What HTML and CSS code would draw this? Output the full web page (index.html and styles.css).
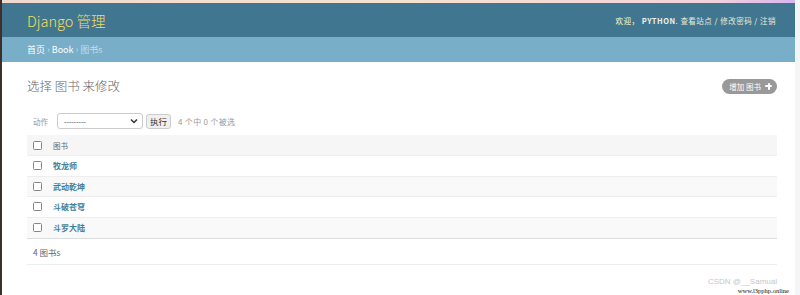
FILE: index.html
```html
<!DOCTYPE html>
<html lang="zh">
<head>
<meta charset="utf-8">
<title>选择 图书 来修改</title>
<link rel="stylesheet" href="styles.css">
</head>
<body>
<div class="frame">
  <div class="topstrip"></div>
  <div class="page">
    <header class="header">
      <div class="brand">Django 管理</div>
      <div class="tools">欢迎， <strong>PYTHON</strong>. <a>查看站点</a> / <a>修改密码</a> / <a>注销</a></div>
    </header>
    <nav class="crumbs"><a>首页</a> › <a>Book</a> › <span class="cur">图书s</span></nav>
    <main class="content">
      <div class="titlerow">
        <h1>选择 图书 来修改</h1>
        <a class="addlink">增加 图书 <span class="plus"></span></a>
      </div>
      <div class="actions">
        <label>动作</label>
        <div class="select"><span>---------</span><svg width="8" height="6" viewBox="0 0 8 6"><path d="M1 1.5 L4 4.5 L7 1.5" fill="none" stroke="#333" stroke-width="1.5"/></svg></div>
        <button class="go">执行</button>
        <span class="counter">4 个中 0 个被选</span>
      </div>
      <div class="table">
        <div class="row head"><span class="cb"></span><span class="hcell">图书</span></div>
        <div class="row"><span class="cb"></span><a class="link">牧龙师</a></div>
        <div class="row alt"><span class="cb"></span><a class="link">武动乾坤</a></div>
        <div class="row"><span class="cb"></span><a class="link">斗破苍穹</a></div>
        <div class="row alt"><span class="cb"></span><a class="link">斗罗大陆</a></div>
      </div>
      <p class="paginator">4 图书s</p>
      <div class="footer">
        <span class="csdn">CSDN @__Samual</span>
        <span class="www">www.l3pphp.online</span>
      </div>
    </main>
  </div>
</div>
</body>
</html>
```
FILE: styles.css
```css
* { box-sizing: border-box; }
html, body { margin: 0; padding: 0; }
body {
  width: 800px; height: 295px; overflow: hidden;
  font-family: "Noto Sans CJK SC", "Liberation Sans", sans-serif;
  background: #fff;
}
.frame {
  height: 295px;
  border-left: 2px solid #3b302c;
  border-right: 5px solid #f3f5f7;
  display: flex; flex-direction: column;
}
.topstrip {
  height: 3px;
  background: linear-gradient(90deg, #efd9cf 0%, #f6e2cf 50%, #f1d2dc 90%, #d8b6ef 100%);
}
.page { flex: 1; display: flex; flex-direction: column; }
.header {
  height: 34px; background: #417690;
  display: flex; align-items: center; justify-content: space-between;
  padding: 0 19px 0 25px;
}
.brand { color: #f5dd5d; font-size: 14.5px; font-weight: 300; line-height: 1; padding-top: 2px; }
.tools { color: #ffc; font-size: 7.5px; letter-spacing: 0.5px; padding-top: 1px; }
.tools strong { color: #f0f0e8; font-weight: 700; }
.tools a { color: #e8ecd8; }
.crumbs {
  height: 25px; background: #79aec8; color: #c4dce8;
  font-size: 9px; padding: 0 0 0 25px; display: flex; align-items: center; gap: 2px;
}
.crumbs a { color: #fff; }
.crumbs .cur { color: #c4dce8; }
.content { padding: 0 18px 0 25px; display: flex; flex-direction: column; flex: 1; }
.titlerow { display: flex; justify-content: space-between; align-items: center; margin-top: 15px; height: 18px; }
h1 { margin: 0; font-size: 12.5px; font-weight: 300; color: #666; line-height: 1; }
.addlink {
  background: #999; color: #fff; font-size: 7.5px; border-radius: 8px;
  height: 15px; padding: 0 5px 0 7px; display: flex; align-items: center; gap: 4px;
}
.plus { width: 7px; height: 7px; position: relative; display: inline-block; }
.plus::before, .plus::after { content: ""; position: absolute; background: #fff; border-radius: 1px; }
.plus::before { left: 0; top: 2.5px; width: 7px; height: 2px; }
.plus::after { left: 2.5px; top: 0; width: 2px; height: 7px; }
.actions { display: flex; align-items: center; margin-top: 17px; height: 18px; padding-left: 6px; }
.actions label { color: #999; font-size: 7.5px; margin-right: 9px; }
.select {
  width: 86px; height: 16px; border: 1px solid #ccc; border-radius: 3px;
  display: flex; align-items: center; justify-content: space-between; padding: 0 4px 0 6px;
  font-size: 7px; color: #333;
}
.go {
  margin-left: 3px; height: 15px; border: 1px solid #ccc; border-radius: 3px; background: #f0f0f0;
  font-family: inherit; font-size: 8.5px; color: #333; padding: 0 3px; line-height: 1;
}
.counter { color: #999; font-size: 8px; margin-left: 7px; letter-spacing: 0.3px; }
.table { margin-top: 5px; border-bottom: 1px solid #ddd; }
.row { height: 20.5px; display: flex; align-items: center; padding-left: 6px; border-bottom: 1px solid #eee; }
.row:last-child { border-bottom: none; }
.row.head { background: #f6f6f6; height: 21px; border-bottom: 1px solid #eee; }
.row.alt { background: #f9f9f9; }
.cb { width: 9px; height: 9px; border: 1px solid #858585; border-radius: 1.5px; background: #fff; margin-right: 11px; }
.hcell { font-size: 7.5px; color: #666; }
.link { font-size: 8px; color: #447e9b; font-weight: 700; }
.paginator { margin: 0; height: 26px; border-bottom: 1px solid #eee; display: flex; align-items: center; padding-left: 6px; font-size: 8.5px; color: #666; }
.footer { flex: 1; position: relative; }
.csdn { position: absolute; right: 0; top: 13px; font-size: 8px; line-height: 8px; color: #c8c8c8; font-family: "Liberation Sans", sans-serif; }
.www { position: absolute; right: -12px; top: 22px; font-size: 6.5px; line-height: 7px; color: #111; font-family: "Liberation Serif", serif; }
```
